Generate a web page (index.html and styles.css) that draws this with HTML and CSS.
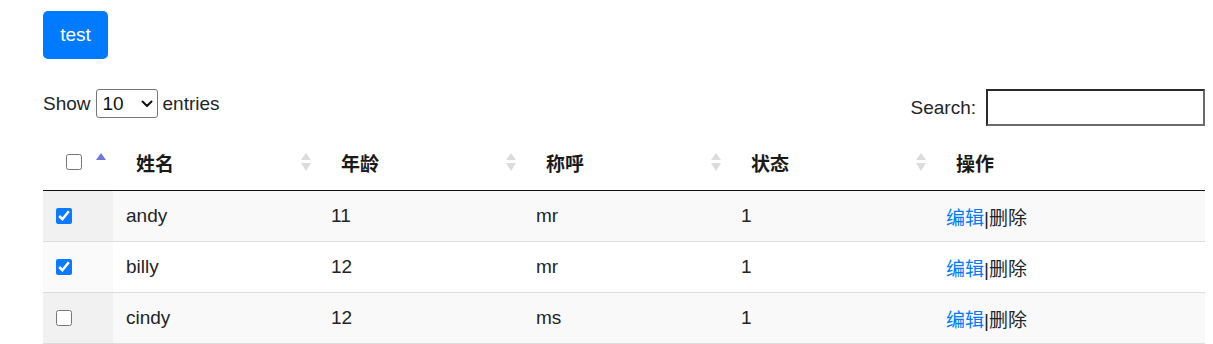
FILE: index.html
```html
<!DOCTYPE html>
<html lang="zh-CN">
<head>
    <meta charset="UTF-8">
    <meta name="viewport" content="width=device-width, initial-scale=1.0">
    <title>test</title>
    <link rel="stylesheet" href="styles.css">
</head>
<body>
    <div class="page">
        <button type="button" class="btn-primary">test</button>

        <div class="table-controls">
            <label class="length-control">
                Show
                <span class="select-wrap">
                    <select name="length">
                        <option value="10">10</option>
                        <option value="25">25</option>
                        <option value="50">50</option>
                        <option value="100">100</option>
                    </select>
                    <svg class="chevron" width="12" height="8" viewBox="0 0 12 8"><path d="M1.5 1.5 L6 6 L10.5 1.5" fill="none" stroke="#111" stroke-width="2" stroke-linecap="round" stroke-linejoin="round"/></svg>
                </span>
                entries
            </label>
            <label class="search-control">
                Search:
                <input type="search" name="search">
            </label>
        </div>

        <table class="data-table">
            <colgroup>
                <col class="col-check">
                <col class="col-mid">
                <col class="col-mid">
                <col class="col-mid">
                <col class="col-mid">
                <col>
            </colgroup>
            <thead>
                <tr>
                    <th><div class="th-inner"><input type="checkbox"><svg class="sort" width="10" height="20" viewBox="0 0 10 20"><path d="M0 8 L5 1 L10 8 Z" fill="#7474dc"/></svg></div></th>
                    <th><div class="th-inner">姓名<svg class="sort" width="10" height="20" viewBox="0 0 10 20"><path d="M0 8 L5 1 L10 8 Z" fill="#dcdcdc"/><path d="M0 11 L5 19 L10 11 Z" fill="#dcdcdc"/></svg></div></th>
                    <th><div class="th-inner">年龄<svg class="sort" width="10" height="20" viewBox="0 0 10 20"><path d="M0 8 L5 1 L10 8 Z" fill="#dcdcdc"/><path d="M0 11 L5 19 L10 11 Z" fill="#dcdcdc"/></svg></div></th>
                    <th><div class="th-inner">称呼<svg class="sort" width="10" height="20" viewBox="0 0 10 20"><path d="M0 8 L5 1 L10 8 Z" fill="#dcdcdc"/><path d="M0 11 L5 19 L10 11 Z" fill="#dcdcdc"/></svg></div></th>
                    <th><div class="th-inner">状态<svg class="sort" width="10" height="20" viewBox="0 0 10 20"><path d="M0 8 L5 1 L10 8 Z" fill="#dcdcdc"/><path d="M0 11 L5 19 L10 11 Z" fill="#dcdcdc"/></svg></div></th>
                    <th><div class="th-inner">操作</div></th>
                </tr>
            </thead>
            <tbody>
                <tr class="odd">
                    <td class="sorting_1"><input type="checkbox" checked></td>
                    <td>andy</td>
                    <td>11</td>
                    <td>mr</td>
                    <td>1</td>
                    <td><a href="#">编辑</a>|删除</td>
                </tr>
                <tr class="even">
                    <td class="sorting_1"><input type="checkbox" checked></td>
                    <td>billy</td>
                    <td>12</td>
                    <td>mr</td>
                    <td>1</td>
                    <td><a href="#">编辑</a>|删除</td>
                </tr>
                <tr class="odd">
                    <td class="sorting_1"><input type="checkbox"></td>
                    <td>cindy</td>
                    <td>12</td>
                    <td>ms</td>
                    <td>1</td>
                    <td><a href="#">编辑</a>|删除</td>
                </tr>
            </tbody>
        </table>
    </div>
</body>
</html>
```

FILE: styles.css
```css
body {
    margin: 0;
    font-family: "Liberation Sans", "Noto Sans CJK SC", sans-serif;
    font-size: 19px;
    color: #212529;
    background-color: #fff;
}

.page {
    padding: 11px 8px 0 43px;
}

.btn-primary {
    display: block;
    width: 65px;
    height: 48px;
    padding: 0;
    border: none;
    border-radius: 5px;
    background-color: #007bff;
    color: white;
    font-family: inherit;
    font-size: 19px;
    cursor: pointer;
}

.table-controls {
    display: flex;
    justify-content: space-between;
    align-items: flex-start;
    margin-top: 30px;
}

.length-control,
.search-control {
    display: flex;
    align-items: center;
}

.length-control {
    gap: 5px;
}

.search-control {
    gap: 10px;
}

.select-wrap {
    position: relative;
    display: inline-block;
}

.select-wrap select {
    appearance: none;
    -webkit-appearance: none;
    width: 62px;
    height: 29px;
    padding: 0 0 0 6px;
    border: 1px solid #767676;
    border-radius: 3px;
    background-color: white;
    font-family: inherit;
    font-size: 19px;
    color: #111;
    display: block;
}

.select-wrap .chevron {
    position: absolute;
    right: 5px;
    top: 11px;
    pointer-events: none;
}

.search-control input {
    width: 219px;
    height: 37px;
    box-sizing: border-box;
    border: 2px solid;
    border-color: #2b2b2b #6b6b6b #6b6b6b #2b2b2b;
    font-family: inherit;
    font-size: 19px;
    outline: none;
}

.data-table {
    width: 100%;
    margin-top: 14px;
    border-collapse: separate;
    border-spacing: 0;
    table-layout: fixed;
}

.col-check {
    width: 70px;
}

.col-mid {
    width: 205px;
}

.data-table th {
    height: 50px;
    padding: 0;
    border-bottom: 1px solid #111;
    font-weight: bold;
    text-align: left;
    color: #1a1a1a;
}

.th-inner {
    display: flex;
    justify-content: space-between;
    align-items: center;
    padding: 0 7px 0 23px;
    margin-top: -6px;
}

.th-inner input,
.data-table td input {
    width: 16px;
    height: 16px;
    margin: 0;
    accent-color: #0a7bff;
}

.sort {
    display: block;
}

.data-table td {
    height: 50px;
    padding: 0 0 0 13px;
    border-bottom: 1px solid #ddd;
    vertical-align: middle;
}

.data-table td input {
    display: block;
}

.data-table tr.odd td {
    background-color: #f9f9f9;
}

.data-table tr.odd td.sorting_1 {
    background-color: #f1f1f1;
}

.data-table tr.even td.sorting_1 {
    background-color: #fafafa;
}

.data-table a {
    color: #007bff;
    text-decoration: none;
}
```
